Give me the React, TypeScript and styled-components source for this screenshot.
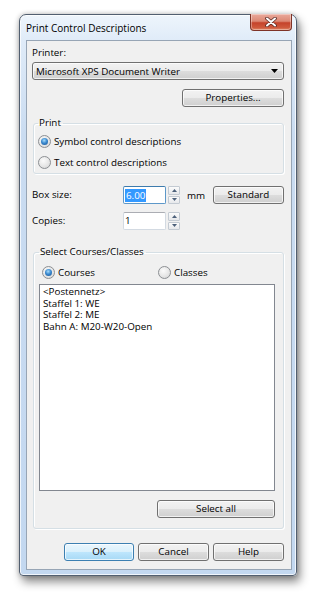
import React from 'react';
import styled, { createGlobalStyle } from 'styled-components';

const Global = createGlobalStyle`
  html, body { margin: 0; padding: 0; background: #ffffff; }
  body {
    font-family: "Open Sans", "Noto Sans", sans-serif;
    font-size: 9.8px;
    color: #000;
  }
  * { box-sizing: border-box; }
`;

const Page = styled.div`
  width: 317px;
  height: 599px;
  padding: 14px 0 0 19px;
`;

const Window = styled.div`
  width: 278px;
  height: 562px;
  border: 1px solid #525f70;
  border-radius: 7px 7px 4px 4px;
  background: linear-gradient(180deg, #eef5fc 0px, #dfebf8 26px, #cadcf1 120px, #c3d8f0 100%);
  box-shadow: 3px 6px 10px rgba(0, 0, 0, 0.45), 0 0 5px rgba(0, 0, 0, 0.25),
    inset 0 0 0 1px rgba(255, 255, 255, 0.75);
  display: flex;
  flex-direction: column;
  padding: 0 4px 5px 6px;
`;

const TitleBar = styled.div`
  height: 25px;
  display: flex;
  justify-content: space-between;
  align-items: flex-start;
`;

const TitleText = styled.div`
  font-size: 10px;
  line-height: 14px;
  margin-top: 6px;
  color: #000;
`;

const CloseButton = styled.div`
  width: 42px;
  height: 17px;
  margin-top: -1px;
  border: 1px solid #7e3327;
  border-top: none;
  border-radius: 0 0 4px 4px;
  background: linear-gradient(180deg, #eaa99b 0%, #dc8874 45%, #c5432b 55%, #cf5a3d 85%, #e08a6a 100%);
  box-shadow: inset 0 0 0 1px rgba(255, 255, 255, 0.35);
  display: flex;
  align-items: center;
  justify-content: center;
`;

const Client = styled.div`
  flex: 1;
  background: #f0f0f0;
  border: 1px solid #97a5b5;
  padding: 5px 7px 0 5px;
  display: flex;
  flex-direction: column;
`;

const Label = styled.div`
  line-height: 14px;
  height: 14px;
`;

const Combo = styled.div`
  margin-top: 2px;
  height: 18px;
  border: 1px solid #707070;
  border-radius: 3px;
  background: linear-gradient(180deg, #f2f2f2 0%, #ebebeb 50%, #dddddd 50%, #cfcfcf 100%);
  box-shadow: inset 0 0 0 1px rgba(255, 255, 255, 0.7);
  display: flex;
  align-items: center;
  justify-content: space-between;
  padding: 0 5px 0 3px;
`;

const Btn = styled.button<{ $w: number; $default?: boolean }>`
  width: ${(p) => p.$w}px;
  height: 18px;
  padding: 0;
  font: inherit;
  color: #000;
  line-height: 14px;
  border: 1px solid ${(p) => (p.$default ? '#3c7fb1' : '#707070')};
  border-radius: 3px;
  background: ${(p) =>
    p.$default
      ? 'linear-gradient(180deg, #eaf6fd 0%, #d9f0fc 50%, #bee6fd 50%, #a7d9f5 100%)'
      : 'linear-gradient(180deg, #f2f2f2 0%, #ebebeb 50%, #dddddd 50%, #cfcfcf 100%)'};
  box-shadow: inset 0 0 0 1px rgba(255, 255, 255, 0.7);
  flex: none;
`;

const RightRow = styled.div<{ $mt: number; $gap?: number; $pb?: number }>`
  margin-top: ${(p) => p.$mt}px;
  padding-bottom: ${(p) => p.$pb ?? 0}px;
  display: flex;
  justify-content: flex-end;
  gap: ${(p) => p.$gap ?? 0}px;
`;

const Group = styled.fieldset<{ $mt: number; $pl: number }>`
  margin: ${(p) => p.$mt}px 0 0 1px;
  padding: 0 8px 0 ${(p) => p.$pl}px;
  border: 1px solid #d5dfe5;
  border-radius: 3px;
  box-shadow: inset 1px 1px 0 #ffffff, 1px 1px 0 #ffffff;
  min-width: 0;
`;

const Legend = styled.legend`
  padding: 0 2px 0 1px;
  line-height: 14px;
`;

const RadioRow = styled.label<{ $w?: number }>`
  display: flex;
  align-items: center;
  height: 16px;
  gap: 3px;
  width: ${(p) => (p.$w ? `${p.$w}px` : 'auto')};
  flex: none;
`;

const RadioCircle = styled.span<{ $checked?: boolean }>`
  width: 13px;
  height: 13px;
  border-radius: 50%;
  border: 1px solid #8c8f93;
  background: radial-gradient(circle at 40% 35%, #fbfbfb 0%, #e6e6e6 55%, #cfd1d3 100%);
  display: flex;
  align-items: center;
  justify-content: center;
  flex: none;
  &::after {
    content: '';
    width: 7px;
    height: 7px;
    border-radius: 50%;
    background: radial-gradient(circle at 45% 35%, #a7dcfb 0%, #3b8ad0 45%, #17508f 100%);
    display: ${(p) => (p.$checked ? 'block' : 'none')};
  }
`;

const PrintBody = styled.div`
  padding: 3px 0 3px 0;
  display: flex;
  flex-direction: column;
  gap: 5px;
`;

const FieldRow = styled.div<{ $mt: number }>`
  margin-top: ${(p) => p.$mt}px;
  height: 18px;
  display: grid;
  grid-template-columns: 89px 43px 12px 1fr auto;
  column-gap: 2px;
  align-items: center;
`;

const TextBox = styled.div<{ $focused?: boolean }>`
  height: 18px;
  border: 1px solid ${(p) => (p.$focused ? '#5d98c9' : '#d3dae2')};
  border-top-color: ${(p) => (p.$focused ? '#3d7bad' : '#abadb3')};
  border-radius: 2px;
  background: #fff;
  padding: 0 0 0 1px;
  display: flex;
  align-items: center;
  line-height: 14px;
`;

const Selected = styled.span`
  background: #3399ff;
  color: #fff;
  padding: 0 1px;
  line-height: 13px;
`;

const Spin = styled.div`
  height: 18px;
  display: flex;
  flex-direction: column;
  gap: 1px;
`;

const SpinPart = styled.div`
  flex: 1;
  border: 1px solid #c3cad2;
  border-radius: 1px;
  background: linear-gradient(180deg, #fbfbfb, #e6e8eb);
  display: flex;
  align-items: center;
  justify-content: center;
`;

const Unit = styled.span`
  padding-left: 5px;
`;

const CoursesRow = styled.div`
  margin-top: 5px;
  padding-left: 3px;
  display: flex;
`;

const ListBox = styled.div`
  margin-top: 4px;
  height: 207px;
  border: 1px solid #828790;
  background: #ffffff;
  padding: 1px 3px;
  line-height: 11.7px;
`;

const ListItem = styled.div`
  white-space: nowrap;
`;

const Arrow = ({ up }: { up: boolean }) => (
  <svg width="5" height="3" viewBox="0 0 5 3">
    <path d={up ? 'M0 3 L2.5 0 L5 3 Z' : 'M0 0 L2.5 3 L5 0 Z'} fill="#4c607a" />
  </svg>
);

const SpinBox = () => (
  <Spin>
    <SpinPart>
      <Arrow up />
    </SpinPart>
    <SpinPart>
      <Arrow up={false} />
    </SpinPart>
  </Spin>
);

export default function App() {
  return (
    <Page>
      <Global />
      <Window>
        <TitleBar>
          <TitleText>Print Control Descriptions</TitleText>
          <CloseButton>
            <svg width="12" height="10" viewBox="0 0 12 10">
              <path d="M2 1.5 L10 8.5 M10 1.5 L2 8.5" stroke="#5a2a24" strokeWidth="3.6" strokeLinecap="round" />
              <path d="M2 1.5 L10 8.5 M10 1.5 L2 8.5" stroke="#ffffff" strokeWidth="2" strokeLinecap="round" />
            </svg>
          </CloseButton>
        </TitleBar>
        <Client>
          <Label>Printer:</Label>
          <Combo>
            <span>Microsoft XPS Document Writer</span>
            <svg width="7" height="4" viewBox="0 0 7 4">
              <path d="M0 0 L7 0 L3.5 4 Z" fill="#000" />
            </svg>
          </Combo>
          <RightRow $mt={9}>
            <Btn $w={102}>Properties...</Btn>
          </RightRow>

          <Group $mt={9} $pl={4}>
            <Legend>Print</Legend>
            <PrintBody>
              <RadioRow>
                <RadioCircle $checked />
                <span>Symbol control descriptions</span>
              </RadioRow>
              <RadioRow>
                <RadioCircle />
                <span>Text control descriptions</span>
              </RadioRow>
            </PrintBody>
          </Group>

          <FieldRow $mt={12}>
            <Label>Box size:</Label>
            <TextBox $focused>
              <Selected>6.00</Selected>
            </TextBox>
            <SpinBox />
            <Unit>mm</Unit>
            <Btn $w={71}>Standard</Btn>
          </FieldRow>
          <FieldRow $mt={8}>
            <Label>Copies:</Label>
            <TextBox>
              <span>1</span>
            </TextBox>
            <SpinBox />
          </FieldRow>

          <Group $mt={15} $pl={5}>
            <Legend>Select Courses/Classes</Legend>
            <CoursesRow>
              <RadioRow $w={116}>
                <RadioCircle $checked />
                <span>Courses</span>
              </RadioRow>
              <RadioRow>
                <RadioCircle />
                <span>Classes</span>
              </RadioRow>
            </CoursesRow>
            <ListBox>
              <ListItem>&lt;Postennetz&gt;</ListItem>
              <ListItem>Staffel 1: WE</ListItem>
              <ListItem>Staffel 2: ME</ListItem>
              <ListItem>Bahn A: M20-W20-Open</ListItem>
            </ListBox>
            <RightRow $mt={9} $pb={10}>
              <Btn $w={118}>Select all</Btn>
            </RightRow>
          </Group>

          <RightRow $mt={14} $gap={4}>
            <Btn $w={70} $default>
              OK
            </Btn>
            <Btn $w={71}>Cancel</Btn>
            <Btn $w={71}>Help</Btn>
          </RightRow>
        </Client>
      </Window>
    </Page>
  );
}
